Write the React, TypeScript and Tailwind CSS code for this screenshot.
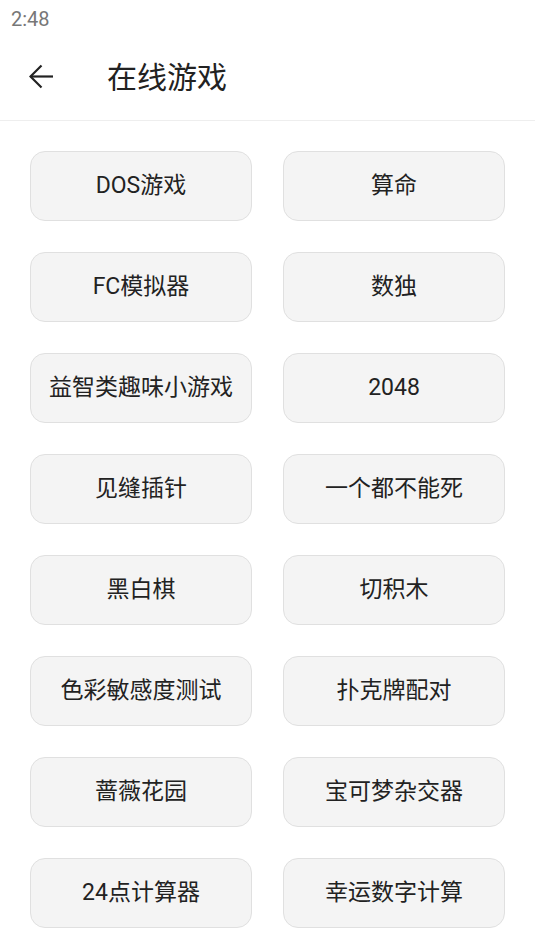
import React from "react";

const items = [
  "DOS游戏", "算命",
  "FC模拟器", "数独",
  "益智类趣味小游戏", "2048",
  "见缝插针", "一个都不能死",
  "黑白棋", "切积木",
  "色彩敏感度测试", "扑克牌配对",
  "蔷薇花园", "宝可梦杂交器",
  "24点计算器", "幸运数字计算",
];

export default function App() {
  return (
    <div
      className="w-[535px] h-[951px] bg-white overflow-hidden"
      style={{ fontFamily: 'Roboto, "Noto Sans CJK SC", sans-serif' }}
    >
      <div className="h-[36px] pl-[11px] pt-[7px] text-[20px] text-[#777777] leading-[24px]">2:48</div>
      <div className="h-[85px] flex items-center border-b border-[#eeeeee]">
        <div className="w-[82px] flex justify-center mb-[3px]">
          <svg width="25" height="25" viewBox="0 0 25 25" fill="none" stroke="#222" strokeWidth="2.2">
            <path d="M1.5 12.5H24" />
            <path d="M12.5 1.5L1.5 12.5L12.5 23.5" />
          </svg>
        </div>
        <div className="ml-[25px] text-[30px] text-[#222222] leading-none">在线游戏</div>
      </div>
      <div className="grid grid-cols-2 gap-x-[31px] gap-y-[31px] px-[30px] pt-[30px]">
        {items.map((t) => (
          <div
            key={t}
            className="h-[70px] rounded-[15px] bg-[#f4f4f4] border-[1.5px] border-[#e0e0e0] flex items-center justify-center text-[23px] text-[#222222]"
          >
            {t}
          </div>
        ))}
      </div>
    </div>
  );
}
